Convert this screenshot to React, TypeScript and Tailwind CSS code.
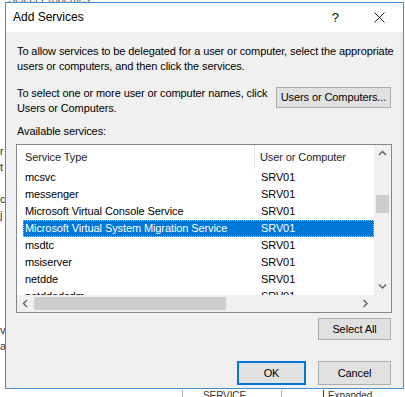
import React from "react";

const rows: [string, string][] = [
  ["mcsvc", "SRV01"],
  ["messenger", "SRV01"],
  ["Microsoft Virtual Console Service", "SRV01"],
  ["Microsoft Virtual System Migration Service", "SRV01"],
  ["msdtc", "SRV01"],
  ["msiserver", "SRV01"],
  ["netdde", "SRV01"],
  ["netddedsdm", "SRV01"],
];

function Chevron({ dir }: { dir: "up" | "down" | "left" | "right" }) {
  const d = {
    up: "M1 5 L4.5 1.5 L8 5",
    down: "M1 1.5 L4.5 5 L8 1.5",
    left: "M5 1 L1.5 4.5 L5 8",
    right: "M1.5 1 L5 4.5 L1.5 8",
  }[dir];
  const vertical = dir === "up" || dir === "down";
  return (
    <svg
      width={vertical ? 9 : 7}
      height={vertical ? 7 : 9}
      viewBox={vertical ? "0 0 9 7" : "0 0 7 9"}
      fill="none"
      stroke="#606060"
      strokeWidth="1.4"
    >
      <path d={d} />
    </svg>
  );
}

function Button({ children, primary, className = "" }: { children: React.ReactNode; primary?: boolean; className?: string }) {
  return (
    <div
      className={`flex items-center justify-center whitespace-nowrap bg-[#e1e1e1] text-black ${
        primary ? "border-2 border-[#0078d7]" : "border border-[#adadad]"
      } ${className}`}
    >
      {children}
    </div>
  );
}

function ServiceList() {
  return (
    <div className="ml-[10px] mt-[5px] w-[376px] h-[169px] border border-[#828790] bg-white flex flex-col shrink-0">
      <div className="flex flex-1 min-h-0">
        <div className="flex-1 flex flex-col overflow-hidden">
          <div className="flex h-[24px] shrink-0 items-center">
            <div className="w-[238px] pl-[8px] text-[#1e1e1e] border-r border-[#e5e5e5] h-full flex items-center">
              Service Type
            </div>
            <div className="pl-[5px] text-[#1e1e1e]">User or Computer</div>
          </div>
          <div className="pl-[6px] flex flex-col">
            {rows.map(([name, host], i) => {
              const sel = i === 3;
              return (
                <div
                  key={name}
                  className={`flex h-[17px] shrink-0 items-center ${
                    sel ? "bg-[#0078d7] text-white outline outline-1 outline-dotted outline-[#9fc8ee] -outline-offset-1" : "text-black"
                  }`}
                >
                  <div className="w-[232px] pl-[2px] whitespace-nowrap">{name}</div>
                  <div className="pl-[6px]">{host}</div>
                </div>
              );
            })}
          </div>
        </div>
        <div className="w-[17px] shrink-0 bg-[#f0f0f0] flex flex-col items-center">
          <div className="h-[17px] flex items-center justify-center">
            <Chevron dir="up" />
          </div>
          <div className="flex-1 w-full px-[2px] pt-[33px]">
            <div className="h-[18px] bg-[#cdcdcd]" />
          </div>
          <div className="h-[17px] flex items-center justify-center">
            <Chevron dir="down" />
          </div>
        </div>
      </div>
      <div className="flex h-[17px] shrink-0">
        <div className="flex-1 bg-[#f0f0f0] flex items-center">
          <div className="w-[17px] flex justify-center">
            <Chevron dir="left" />
          </div>
          <div className="flex-1 h-full py-[2px]">
            <div className="w-[192px] h-full bg-[#cdcdcd]" />
          </div>
          <div className="w-[17px] flex justify-center">
            <Chevron dir="right" />
          </div>
        </div>
        <div className="w-[17px] bg-[#f0f0f0]" />
      </div>
    </div>
  );
}

export default function App() {
  return (
    <div
      className="w-[405px] h-[397px] bg-white relative overflow-hidden text-[11px] leading-[15px] tracking-[-0.1px]"
      style={{ fontFamily: '"Liberation Sans", Arial, sans-serif' }}
    >
      {/* bits of the window behind */}
      <div className="absolute left-[8px] -top-[8px] text-[#666]">Select Properties</div>
      <div className="absolute left-0 top-[143px] flex flex-col text-[#333] leading-[16px]">
        <span>r</span>
        <span>t</span>
        <span className="mt-[16px]">c</span>
        <span>j</span>
      </div>
      <div className="absolute left-0 top-[322px] flex flex-col text-[#333] leading-[16px]">
        <span>v</span>
        <span>a</span>
      </div>
      <div className="absolute left-[182px] top-[390px] w-[100px] h-[10px] border-l border-r border-[#adadad] pl-[20px] text-[#333] text-[10px] leading-[12px]">
        SERVICE
      </div>
      <div className="absolute left-[323px] top-[390px] border-l border-[#333] pl-[4px] text-[#333] text-[10px] leading-[12px]">
        Expanded
      </div>

      <div className="absolute left-[5px] top-[2px] w-[399px] h-[387px] border border-[#3e8fd6] bg-[#f0f0f0] flex flex-col">
        <div className="h-[29px] bg-white flex items-center shrink-0">
          <span className="pl-[7px] text-[12px] tracking-normal text-black">Add Services</span>
          <span className="ml-auto mr-[35px] text-[13px] text-black">?</span>
          <svg width="11" height="11" viewBox="0 0 11 11" className="mr-[18px]" stroke="#222" strokeWidth="1">
            <path d="M0.5 0.5 L10.5 10.5 M10.5 0.5 L0.5 10.5" />
          </svg>
        </div>

        <div className="pl-[11px] pt-[12px] text-black whitespace-nowrap">
          <div>To allow services to be delegated for a user or computer, select the appropriate</div>
          <div>users or computers, and then click the services.</div>
        </div>

        <div className="flex items-start pl-[11px] pr-[12px] mt-[12px]">
          <div className="text-black whitespace-nowrap">
            <div>To select one or more user or computer names, click</div>
            <div>Users or Computers.</div>
          </div>
          <Button className="ml-auto mt-[1px] w-[115px] h-[21px]">Users or Computers...</Button>
        </div>

        <div className="pl-[11px] mt-[8px] text-black">Available services:</div>

        <ServiceList />

        <div className="flex justify-end pr-[12px] mt-[5px]">
          <Button className="w-[73px] h-[22px]">Select All</Button>
        </div>

        <div className="flex justify-end gap-[12px] pr-[12px] mt-auto mb-[3px]">
          <Button primary className="w-[69px] h-[24px]">OK</Button>
          <Button className="w-[73px] h-[24px]">Cancel</Button>
        </div>
      </div>
    </div>
  );
}
